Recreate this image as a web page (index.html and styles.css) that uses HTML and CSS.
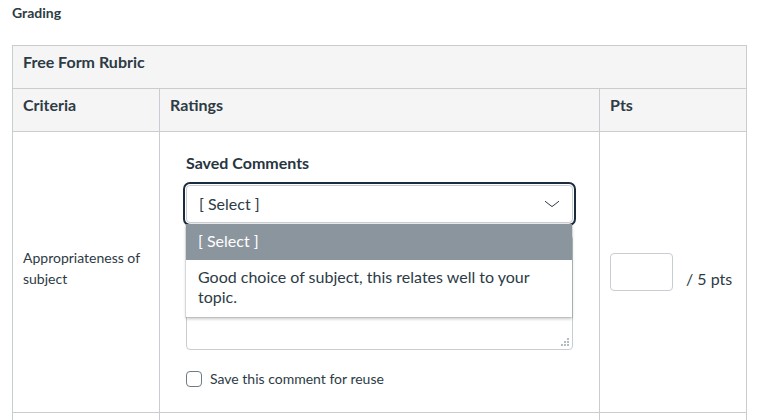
FILE: index.html
```html
<!DOCTYPE html>
<html lang="en">
<head>
<meta charset="utf-8">
<title>Grading</title>
<link rel="stylesheet" href="styles.css">
</head>
<body>
<div class="page">
  <h2 class="section-title">Grading</h2>
  <div class="rubric" role="table">
    <div class="rubric-title">Free Form Rubric</div>
    <div class="th">Criteria</div>
    <div class="th">Ratings</div>
    <div class="th">Pts</div>

    <div class="td criterion">Appropriateness of subject</div>
    <div class="td ratings">
      <div class="field-label">Saved Comments</div>
      <div class="combo">
        <div class="select" role="combobox" aria-expanded="true">
          <span>[ Select ]</span>
          <svg class="chevron" width="16" height="8" viewBox="0 0 16 8" aria-hidden="true"><path d="M1 1.2 L8 6.6 L15 1.2" fill="none" stroke="#2d3b45" stroke-width="1"/></svg>
        </div>
        <ul class="listbox" role="listbox">
          <li class="option selected">[ Select ]</li>
          <li class="option">Good choice of subject, this relates well to your topic.</li>
        </ul>
      </div>
      <div class="comment-wrap">
        <textarea class="comment"></textarea>
        <svg class="grip" width="8" height="8" viewBox="0 0 8 8" aria-hidden="true">
          <g fill="#b5bcc2">
            <rect x="6" y="0" width="2" height="2"/>
            <rect x="3" y="3" width="2" height="2"/><rect x="6" y="3" width="2" height="2"/>
            <rect x="0" y="6" width="2" height="2"/><rect x="3" y="6" width="2" height="2"/><rect x="6" y="6" width="2" height="2"/>
          </g>
        </svg>
      </div>
      <label class="check"><span class="box"></span><span>Save this comment for reuse</span></label>
    </div>
    <div class="td pts">
      <span class="pts-input"></span>
      <span class="pts-label">/ 5 pts</span>
    </div>

    <div class="td next"></div>
    <div class="td next"></div>
    <div class="td next"></div>
  </div>
</div>
</body>
</html>
```

FILE: styles.css
```css
* { box-sizing: border-box; }
html, body { margin: 0; padding: 0; background: #fff; }
body {
  font-family: Lato, "Noto Sans", "Liberation Sans", sans-serif;
  color: #2d3b45;
  overflow: hidden;
}
.page { padding: 0 0 0 12px; }
.section-title {
  margin: 4px 0 23px;
  font-size: 14px;
  line-height: 18px;
  font-weight: 700;
}
.rubric {
  width: 735px;
  display: grid;
  grid-template-columns: 147px 440px 147px;
  border-left: 1px solid #c7cdd1;
  border-top: 1px solid #c7cdd1;
}
.rubric-title, .th, .td {
  border-right: 1px solid #c7cdd1;
  border-bottom: 1px solid #c7cdd1;
}
.rubric-title, .th {
  background: #f5f5f5;
  height: 43px;
  padding: 7px 10px 0;
  font-size: 16px;
  line-height: 18px;
  font-weight: 700;
}
.rubric-title { grid-column: 1 / 4; }
.td { height: 281px; }
.td.next { height: 40px; }

.criterion {
  display: flex;
  align-items: center;
  padding: 0 10px 8px;
  font-size: 14px;
  line-height: 21px;
}

.ratings { padding: 21px 26px 0; }
.field-label {
  font-size: 16px;
  line-height: 20px;
  font-weight: 700;
  color: #273540;
  margin-bottom: 12px;
}
.combo { position: relative; }
.select {
  height: 38px;
  border: 1px solid #c7cdd1;
  border-radius: 4px;
  outline: 2px solid #1a2c3d;
  outline-offset: 1px;
  display: flex;
  align-items: center;
  justify-content: space-between;
  padding: 0 12px 2px;
  font-size: 16px;
}
.chevron { margin-top: 2px; }
.listbox {
  position: absolute;
  top: 39px;
  left: 0;
  width: 386px;
  margin: 0;
  padding: 0;
  list-style: none;
  background: #fff;
  box-shadow: 0 0 0 1px rgba(0,0,0,0.08), 0 2px 3px rgba(0,0,0,0.22);
  z-index: 2;
}
.option {
  font-size: 16px;
  line-height: 19.5px;
  padding: 7px 12px 11px;
}
.option.selected {
  background: #8b959e;
  color: #fff;
  height: 36px;
  padding-top: 7px;
}
.comment-wrap {
  position: relative;
  margin-top: 12px;
}
.comment {
  display: block;
  width: 387px;
  height: 115px;
  margin: 0;
  border: 1px solid #c7cdd1;
  border-radius: 4px;
  font: inherit;
  background: #fff;
  resize: none;
}
.grip {
  position: absolute;
  right: 4px;
  bottom: 4px;
}
.check {
  display: flex;
  align-items: center;
  gap: 8px;
  margin-top: 21px;
  font-size: 14px;
  line-height: 16px;
}
.box {
  width: 16px;
  height: 16px;
  border: 1px solid #6f7c86;
  border-radius: 4px;
  flex: none;
}

.pts {
  display: flex;
  align-items: center;
  padding: 0 10px;
  gap: 13px;
}
.pts-input {
  width: 63px;
  height: 38px;
  border: 1px solid #c7cdd1;
  border-radius: 4px;
  flex: none;
}
.pts-label {
  font-size: 16px;
  padding-top: 13px;
}
```
